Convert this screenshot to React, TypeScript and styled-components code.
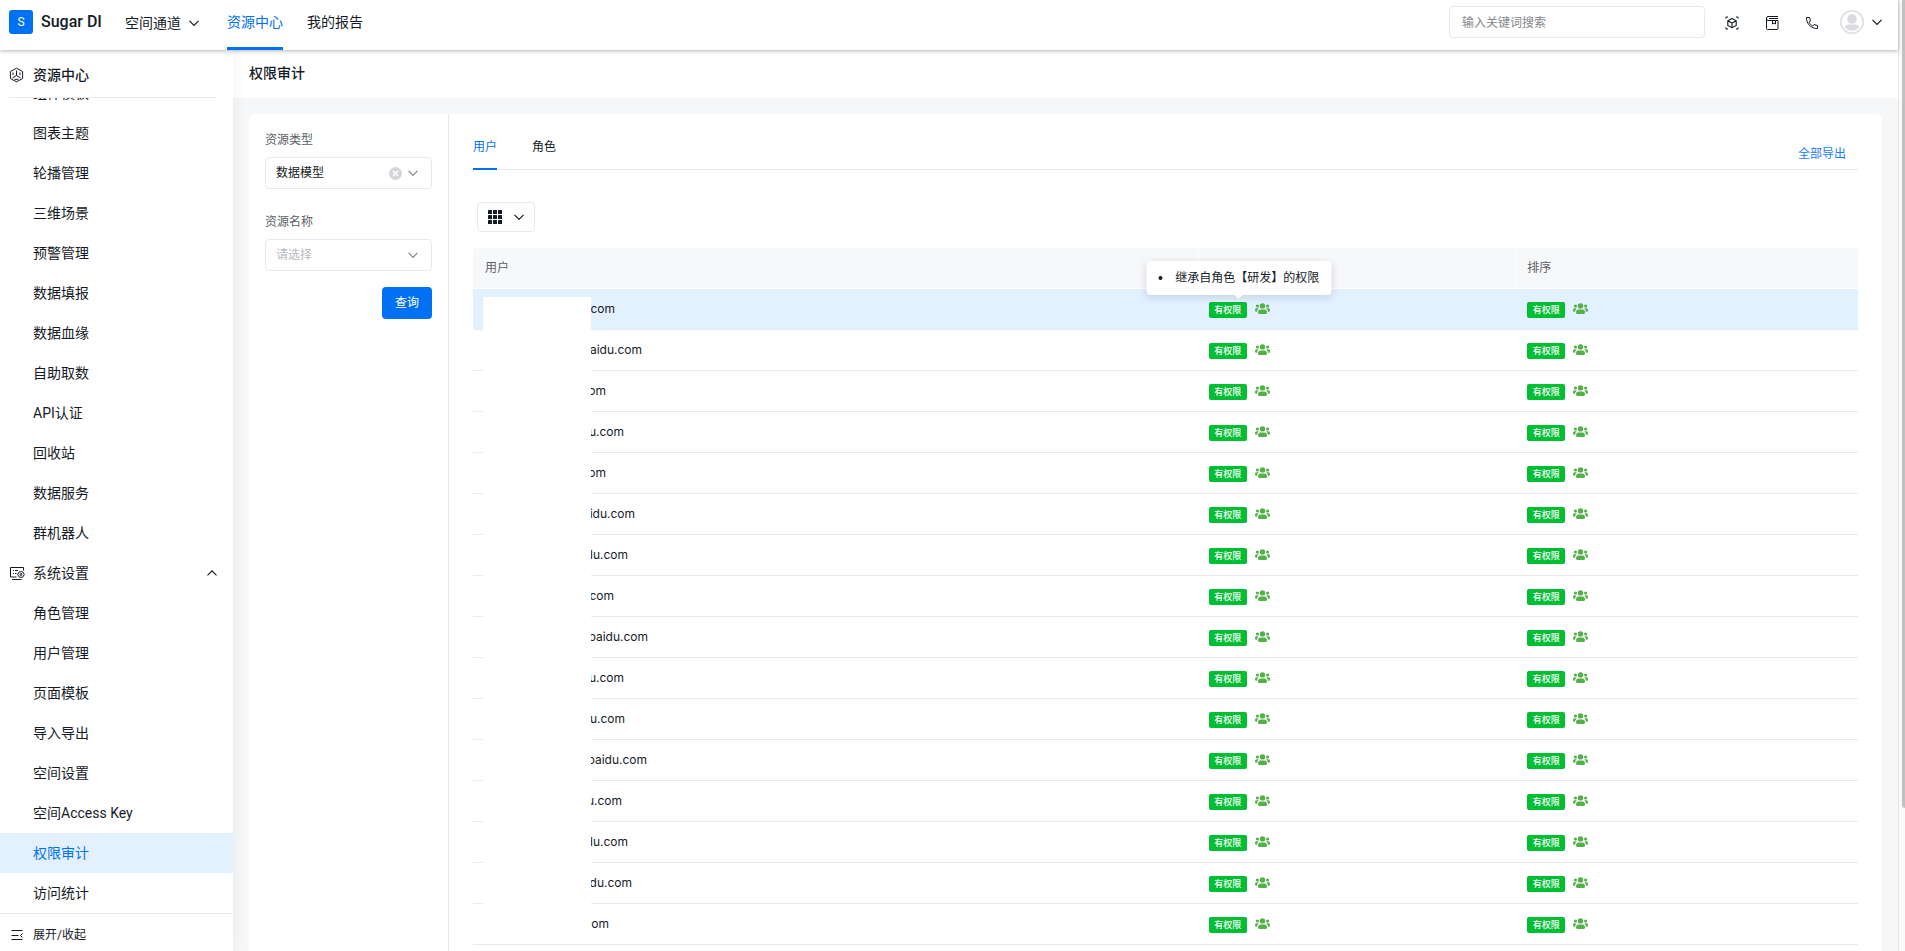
import React from "react";
import styled, { createGlobalStyle } from "styled-components";

const blue = "#0071f2";
const ink = "#151b26";
const line = "#e8e9eb";

const GlobalStyle = createGlobalStyle`
  * { box-sizing: border-box; }
  body {
    margin: 0;
    background: #fff;
    color: ${ink};
    font-family: Roboto, "Noto Sans CJK SC", sans-serif;
    font-size: 12px;
    line-height: 20px;
  }
  button, input, select { font: inherit; color: inherit; }
  a { color: inherit; text-decoration: none; }
  svg { flex: none; }
`;

const Shell = styled.div`
  display: flex;
  height: 100vh;
  overflow: hidden;
`;

const Page = styled.div`
  display: flex;
  flex: 1;
  flex-direction: column;
  min-width: 0;
`;

const ScrollTrack = styled.div`
  display: flex;
  justify-content: flex-end;
  width: 7px;
  border-left: 1px solid #e6e6e6;
  background: #fafafa;
`;

const ScrollThumb = styled.div`
  width: 3px;
  height: 85%;
  border-radius: 0 0 0 3px;
  background: #c1c1c1;
`;

const TopBar = styled.header`
  position: relative;
  z-index: 2;
  display: flex;
  flex: none;
  height: 50px;
  padding: 0 16px 0 9px;
  background: #fff;
  box-shadow: 0 1px 4px rgba(0, 0, 0, 0.3);
`;

const Brand = styled.a`
  display: flex;
  align-items: center;
  gap: 8px;
  width: 95px;
  height: 44px;
  font-size: 16px;
  font-weight: 500;
  white-space: nowrap;
`;

const Logo = styled.span`
  width: 24px;
  height: 24px;
  border-radius: 3px;
  background: ${blue};
  color: #fff;
  font-size: 12px;
  font-weight: 400;
  line-height: 24px;
  text-align: center;
`;

const SpaceSwitch = styled.button`
  display: flex;
  align-items: center;
  gap: 8px;
  height: 46px;
  margin: 0 28px 0 21px;
  padding: 0;
  border: 0;
  background: none;
  font-size: 14px;
`;

const NavLinks = styled.nav`
  display: flex;
  gap: 24px;
`;

const NavLink = styled.a<{ $active?: boolean }>`
  height: 50px;
  border-bottom: 3px solid ${(p) => (p.$active ? blue : "transparent")};
  color: ${(p) => (p.$active ? blue : ink)};
  font-size: 14px;
  line-height: 44px;
`;

const TopTools = styled.div`
  display: flex;
  align-items: center;
  height: 44px;
  margin-left: auto;
`;

const SearchBox = styled.input`
  width: 256px;
  height: 32px;
  margin-right: 19px;
  padding: 2px 12px 0;
  border: 1px solid ${line};
  border-radius: 4px;
  outline: 0;

  &::placeholder { color: #84868c; }
`;

const ToolButton = styled.button`
  display: flex;
  align-items: center;
  justify-content: center;
  width: 16px;
  height: 24px;
  margin-right: 24px;
  padding: 2px 0 0;
  border: 0;
  background: none;
`;

const AccountButton = styled.button`
  display: flex;
  align-items: center;
  gap: 8px;
  margin-left: -4px;
  padding: 0;
  border: 0;
  background: none;
`;

const Body = styled.div`
  display: flex;
  flex: 1;
  min-height: 0;
`;

const Sidebar = styled.aside`
  position: relative;
  z-index: 1;
  display: flex;
  flex: none;
  flex-direction: column;
  width: 233px;
  background: #fff;
  box-shadow: 0 0 16px rgba(7, 12, 20, 0.06);
`;

const SidebarTitle = styled.div`
  display: flex;
  flex: none;
  align-items: center;
  gap: 8px;
  height: 48px;
  margin: 0 16px 0 9px;
  padding-top: 2px;
  border-bottom: 1px solid ${line};
  font-size: 14px;
  font-weight: 500;
`;

const MenuScroll = styled.nav`
  display: flex;
  flex: 1;
  flex-direction: column;
  justify-content: flex-end;
  min-height: 0;
  overflow: hidden;
`;

const MenuItem = styled.a<{ $active?: boolean }>`
  flex: none;
  height: 40px;
  padding-left: 33px;
  background: ${(p) => (p.$active ? "#e2f0ff" : "transparent")};
  color: ${(p) => (p.$active ? blue : ink)};
  font-size: 14px;
  line-height: 40px;
`;

const MenuGroup = styled.button`
  display: flex;
  flex: none;
  align-items: center;
  gap: 8px;
  height: 40px;
  padding: 0 16px 0 9px;
  border: 0;
  background: none;
  font-size: 14px;

  svg:last-child { margin-left: auto; }
`;

const CollapseButton = styled.button`
  display: flex;
  flex: none;
  align-items: center;
  gap: 8px;
  height: 38px;
  padding: 4px 9px 0;
  border: 0;
  border-top: 1px solid ${line};
  background: none;
`;

const Main = styled.main`
  display: flex;
  flex: 1;
  flex-direction: column;
  min-width: 0;
  background: #f6f7f9;
`;

const PageTitle = styled.h1`
  flex: none;
  height: 48px;
  margin: 0;
  padding-left: 16px;
  background: #fff;
  font-size: 14px;
  font-weight: 500;
  line-height: 46px;
`;

const Panel = styled.div`
  display: flex;
  flex: 1;
  min-height: 0;
  margin: 16px 16px 0;
  border-radius: 6px 6px 0 0;
  background: #fff;
  overflow: hidden;
`;

const Filters = styled.form`
  display: flex;
  flex: none;
  flex-direction: column;
  width: 200px;
  padding: 9px 16px;
  border-right: 1px solid ${line};
`;

const FilterLabel = styled.label`
  padding: 7px 0;
  color: #5c5f66;
`;

const SelectWrap = styled.div`
  position: relative;
  margin-bottom: 16px;
`;

const SelectBox = styled.select<{ $empty?: boolean }>`
  display: block;
  width: 100%;
  height: 32px;
  padding: 0 10px;
  border: 1px solid ${line};
  border-radius: 4px;
  outline: 0;
  appearance: none;
  background: #fff;
  color: ${(p) => (p.$empty ? "#b8babf" : ink)};
`;

const SelectIcons = styled.span`
  position: absolute;
  top: 0;
  right: 14px;
  display: flex;
  align-items: center;
  gap: 6px;
  height: 32px;
  color: #84868c;
  pointer-events: none;
`;

const QueryButton = styled.button`
  align-self: flex-end;
  width: 50px;
  height: 32px;
  padding: 0;
  border: 0;
  border-radius: 4px;
  background: ${blue};
  color: #fff;
`;

const Content = styled.section`
  flex: 1;
  min-width: 0;
  padding: 16px 24px 0;
`;

const TabBar = styled.div`
  display: flex;
  height: 40px;
  border-bottom: 1px solid ${line};
`;

const Tab = styled.button<{ $active?: boolean }>`
  height: 40px;
  margin-right: 35px;
  padding: 0 0 4px;
  border: 0;
  border-bottom: 2px solid ${(p) => (p.$active ? blue : "transparent")};
  background: none;
  color: ${(p) => (p.$active ? blue : ink)};
`;

const ExportLink = styled.a`
  margin: 14px 12px 0 auto;
  color: #1a7df5;
`;

const ColumnsButton = styled.button`
  display: flex;
  align-items: center;
  gap: 12px;
  width: 58px;
  height: 30px;
  margin: 32px 0 16px 4px;
  padding: 0 10px;
  border: 1px solid ${line};
  border-radius: 4px;
  background: #fff;
`;

const TableArea = styled.div`
  position: relative;
`;

const Redaction = styled.div`
  position: absolute;
  top: 49px;
  left: 10px;
  width: 108px;
  height: 640px;
  background: #fff;
`;

const Table = styled.table`
  width: 100%;
  border-collapse: separate;
  border-spacing: 0;
  table-layout: fixed;
`;

const HeadCell = styled.th`
  height: 41px;
  padding: 0 10px;
  border-right: 1px solid #fff;
  border-bottom: 1px solid #fff;
  background: #f7f8fa;
  color: #5c5f66;
  font-weight: 400;
  text-align: left;

  &:first-child { padding-left: 12px; border-top-left-radius: 4px; }
  &:last-child { border-right: 0; border-top-right-radius: 4px; }
`;

const Row = styled.tr<{ $hovered?: boolean }>`
  background: ${(p) => (p.$hovered ? "#e2f0ff" : "#fff")};
`;

const Cell = styled.td`
  height: 41px;
  padding: 0 10px;
  border-bottom: 1px solid ${line};

  &:first-child { padding-left: 118px; }
`;

const MailTail = styled.span`
  display: flex;
  justify-content: flex-end;
  overflow: hidden;
  font-family: Inter, sans-serif;
  white-space: nowrap;
`;

const Permission = styled.div`
  position: relative;
  display: flex;
  align-items: center;
  gap: 8px;
  width: max-content;
  color: #54b048;
`;

const Tag = styled.span`
  width: 38px;
  height: 16px;
  margin-top: 2px;
  border-radius: 2px;
  background: #00bf32;
  color: #fff;
  font-size: 9px;
  font-weight: 500;
  line-height: 16px;
  text-align: center;
`;

const Tooltip = styled.div`
  position: absolute;
  bottom: 23px;
  left: 30px;
  transform: translateX(-50%);
  padding: 7px 12px;
  border-radius: 4px;
  background: #fff;
  box-shadow: 0 2px 8px rgba(7, 12, 20, 0.14);
  color: ${ink};
  white-space: nowrap;

  &::after {
    content: "";
    position: absolute;
    top: 100%;
    left: 50%;
    margin-left: -4px;
    border: 4px solid transparent;
    border-top-color: #fff;
  }
`;

const TipList = styled.ul`
  margin: 0;
  padding: 0;
  list-style: none;
`;

const TipItem = styled.li`
  display: flex;
  align-items: center;
  gap: 13px;

  &::before {
    content: "";
    width: 4px;
    height: 4px;
    border-radius: 50%;
    background: ${ink};
  }
`;

const Chevron = ({ up = false }: { up?: boolean }) => (
  <svg width="10" height="10" viewBox="0 0 10 10" fill="none" stroke="currentColor" strokeWidth="1.2">
    <path d={up ? "M.5 7.3 5 2.8l4.5 4.5" : "M.5 2.8 5 7.3l4.5-4.5"} />
  </svg>
);

const ResourceIcon = () => (
  <svg width="16" height="16" viewBox="0 0 16 16" fill="none" stroke="currentColor" strokeWidth="1">
    <path d="M7.500 1.200 13.600 4.500v7L7.500 14.800 1.400 11.500v-7z" />
    <path d="M7.500 3.500v5M7.500 8.500l-4 2.400M7.500 8.500l4 2.400M4 5.500v2.500M11 5.500v2.500M5.500 12.300h4" />
  </svg>
);

const SettingsIcon = () => (
  <svg width="16" height="16" viewBox="0 0 16 16" fill="none" stroke="currentColor" strokeWidth="1">
    <path d="M14.500 5.500V2.500H1.500v9.500H7.500M3 14.500h9.500M4 5.500h1M6 5.500h3M4 8.500h1M6 8.500h1.500" />
    <path d="M10.300 6.800h3.400l1.600 2.700-1.600 2.700h-3.400L8.700 9.500z" />
    <circle cx="12" cy="9.500" r="1" />
  </svg>
);

const CollapseIcon = () => (
  <svg width="16" height="16" viewBox="0 0 16 16" fill="none" stroke="currentColor" strokeWidth="1">
    <path d="M2.500 3.500h11M2.500 8.500h7M2.500 12.500h11M13.500 6.500l-2 2 2 2" />
  </svg>
);

const CubeIcon = () => (
  <svg width="16" height="16" viewBox="0 0 16 16" fill="none" stroke="currentColor" strokeWidth="1.1">
    <path d="M1.500 3.500l1-1.500H4M12 2h1.500l1 1.500M14.500 12.500l-1 1.500H12M4 14H2.500l-1-1.500" />
    <path d="m8 3.500 4.200 2.300v4.600L8 12.700l-4.200-2.300V5.800zM3.800 5.800 8 8.100l4.200-2.300M8 8.100v4.600" />
  </svg>
);

const BookIcon = () => (
  <svg width="16" height="16" viewBox="0 0 16 16" fill="none" stroke="currentColor" strokeWidth="1">
    <path d="M14 1.500H4A1.500 1.500 0 0 0 2.500 3v10.500a1 1 0 0 0 1 1H13a1 1 0 0 0 1-1v-8H4A1.500 1.500 0 0 1 2.500 4M5 3.500h9M8.500 5.500V9L10 8l1.500 1V5.500" />
  </svg>
);

const PhoneIcon = () => (
  <svg width="16" height="16" viewBox="0 0 16 16" fill="none" stroke="currentColor" strokeWidth="1">
    <path d="M2.500 2.500h3l1 3.500L5 7.200c.8 1.800 2 3 3.800 3.800L10 9.500l3.500 1v3c-6 .5-11.500-5-11-11z" />
  </svg>
);

const AvatarIcon = () => (
  <svg width="24" height="24" viewBox="0 0 24 24" fill="#d9dbe0">
    <circle cx="12" cy="12" r="11.200" fill="#fff" stroke="#dcdee3" strokeWidth="1.600" />
    <circle cx="12" cy="9" r="4.800" />
    <path d="M4.500 16.500c2-1.500 4-2.200 5.500-2.200 1 .6 3 .6 4 0 1.500 0 3.500.7 5.500 2.200-1.800 2.800-4.500 4.300-7.500 4.300s-5.700-1.500-7.500-4.300z" />
  </svg>
);

const ClearIcon = () => (
  <svg width="13" height="13" viewBox="0 0 13 13">
    <circle cx="6.500" cy="6.500" r="6.500" fill="#d4d6d9" />
    <path d="m4 4 5 5M9 4 4 9" stroke="#fff" strokeWidth="1.300" />
  </svg>
);

const GridIcon = () => (
  <svg width="14" height="14" viewBox="0 0 14 14" fill="currentColor">
    {[0, 5, 10].map((y) => [0, 5, 10].map((x) => <rect key={`${x}-${y}`} x={x} y={y} width="4" height="4" rx=".5" />))}
  </svg>
);

const GroupIcon = () => (
  <svg width="15" height="12" viewBox="0 0 15 12" fill="currentColor">
    <circle cx="7.500" cy="2.900" r="2.700" />
    <circle cx="2.400" cy="3" r="1.600" />
    <circle cx="12.600" cy="3" r="1.600" />
    <path d="M3 9.500C3 7.600 4 6.500 5.500 6.500h4c1.500 0 2.500 1.100 2.500 3 0 .9-.6 1.500-1.500 1.500h-6C3.600 11 3 10.400 3 9.500z" />
    <path d="M0 7.500C0 6 .6 5.300 1.600 5.300h2.200C2.800 6.200 2.200 7.200 2.100 8.700H1C.4 8.700 0 8.300 0 7.500zM15 7.500c0-1.500-.6-2.200-1.600-2.200h-2.200c1 .9 1.600 1.900 1.700 3.400H14c.6 0 1-.4 1-1.200z" />
  </svg>
);

const resourceItems = ["组件模板", "图表主题", "轮播管理", "三维场景", "预警管理", "数据填报", "数据血缘", "自助取数", "API认证", "回收站", "数据服务", "群机器人"];
const systemItems = ["角色管理", "用户管理", "页面模板", "导入导出", "空间设置", "空间Access Key", "权限审计", "访问统计"];

const users = [
  { mail: "com", visible: 24 },
  { mail: "aidu.com", visible: 51 },
  { mail: "com", visible: 15 },
  { mail: "u.com", visible: 33 },
  { mail: "com", visible: 15 },
  { mail: "idu.com", visible: 44 },
  { mail: "du.com", visible: 37 },
  { mail: ".com", visible: 23 },
  { mail: "baidu.com", visible: 57 },
  { mail: "u.com", visible: 33 },
  { mail: "u.com", visible: 34 },
  { mail: "baidu.com", visible: 56 },
  { mail: "u.com", visible: 31 },
  { mail: "du.com", visible: 37 },
  { mail: "du.com", visible: 41 },
  { mail: "om", visible: 18 },
  { mail: "du.com", visible: 41 },
];

const PermissionMark = ({ tip }: { tip?: string }) => (
  <Permission>
    <Tag>有权限</Tag>
    <GroupIcon />
    {tip && (
      <Tooltip role="tooltip">
        <TipList>
          <TipItem>{tip}</TipItem>
        </TipList>
      </Tooltip>
    )}
  </Permission>
);

export default function App() {
  return (
    <Shell>
      <GlobalStyle />
      <Page>
        <TopBar>
          <Brand href="#">
            <Logo>S</Logo>
            Sugar DI
          </Brand>
          <SpaceSwitch type="button">
            空间通道
            <Chevron />
          </SpaceSwitch>
          <NavLinks>
            <NavLink href="#" $active>资源中心</NavLink>
            <NavLink href="#">我的报告</NavLink>
          </NavLinks>
          <TopTools>
            <SearchBox type="search" placeholder="输入关键词搜索" aria-label="搜索" />
            <ToolButton type="button" aria-label="三维"><CubeIcon /></ToolButton>
            <ToolButton type="button" aria-label="文档"><BookIcon /></ToolButton>
            <ToolButton type="button" aria-label="电话"><PhoneIcon /></ToolButton>
            <AccountButton type="button" aria-label="账户">
              <AvatarIcon />
              <Chevron />
            </AccountButton>
          </TopTools>
        </TopBar>
        <Body>
          <Sidebar>
            <SidebarTitle>
              <ResourceIcon />
              资源中心
            </SidebarTitle>
            <MenuScroll>
              {resourceItems.map((name) => (
                <MenuItem key={name} href="#">{name}</MenuItem>
              ))}
              <MenuGroup type="button">
                <SettingsIcon />
                系统设置
                <Chevron up />
              </MenuGroup>
              {systemItems.map((name) => (
                <MenuItem key={name} href="#" $active={name === "权限审计"}>{name}</MenuItem>
              ))}
            </MenuScroll>
            <CollapseButton type="button">
              <CollapseIcon />
              展开/收起
            </CollapseButton>
          </Sidebar>
          <Main>
            <PageTitle>权限审计</PageTitle>
            <Panel>
              <Filters>
                <FilterLabel htmlFor="kind">资源类型</FilterLabel>
                <SelectWrap>
                  <SelectBox id="kind" defaultValue="model">
                    <option value="model">数据模型</option>
                  </SelectBox>
                  <SelectIcons>
                    <ClearIcon />
                    <Chevron />
                  </SelectIcons>
                </SelectWrap>
                <FilterLabel htmlFor="name">资源名称</FilterLabel>
                <SelectWrap>
                  <SelectBox id="name" defaultValue="" $empty>
                    <option value="">请选择</option>
                  </SelectBox>
                  <SelectIcons>
                    <Chevron />
                  </SelectIcons>
                </SelectWrap>
                <QueryButton type="button">查询</QueryButton>
              </Filters>
              <Content>
                <TabBar>
                  <Tab type="button" $active>用户</Tab>
                  <Tab type="button">角色</Tab>
                  <ExportLink href="#">全部导出</ExportLink>
                </TabBar>
                <ColumnsButton type="button" aria-label="显示列">
                  <GridIcon />
                  <Chevron />
                </ColumnsButton>
                <TableArea>
                  <Table>
                    <colgroup>
                      <col style={{ width: "52.4%" }} />
                      <col style={{ width: "23%" }} />
                      <col />
                    </colgroup>
                    <thead>
                      <tr>
                        <HeadCell>用户</HeadCell>
                        <HeadCell />
                        <HeadCell>排序</HeadCell>
                      </tr>
                    </thead>
                    <tbody>
                      {users.map((user, i) => (
                        <Row key={i} $hovered={i === 0}>
                          <Cell>
                            <MailTail style={{ width: user.visible }}>{user.mail}</MailTail>
                          </Cell>
                          <Cell>
                            <PermissionMark tip={i === 0 ? "继承自角色【研发】的权限" : undefined} />
                          </Cell>
                          <Cell>
                            <PermissionMark />
                          </Cell>
                        </Row>
                      ))}
                    </tbody>
                  </Table>
                  <Redaction />
                </TableArea>
              </Content>
            </Panel>
          </Main>
        </Body>
      </Page>
      <ScrollTrack>
        <ScrollThumb />
      </ScrollTrack>
    </Shell>
  );
}
